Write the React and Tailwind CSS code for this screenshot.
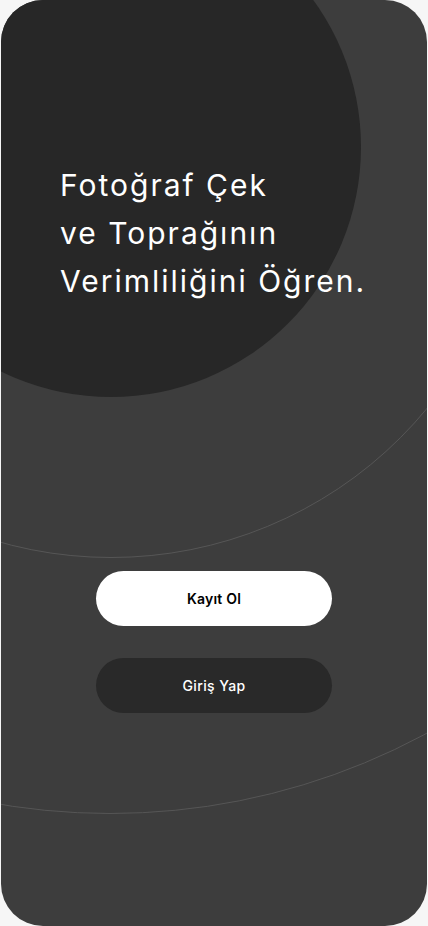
export default function App() {
  return (
    <div className="w-full h-[926px] bg-[#f6f6f6] px-px" style={{ fontFamily: "Inter, 'Noto Sans', sans-serif" }}>
      <div className="relative h-full w-full overflow-hidden rounded-[42px] bg-[#3d3d3d]">
        <div className="absolute left-[-557px] top-[-518px] h-[1332px] w-[1332px] rounded-full border border-[#565656]" />
        <div className="absolute left-[-300px] top-[-262px] h-[820px] w-[820px] rounded-full border border-[#565656]" />
        <div className="absolute left-[-140px] top-[-103px] h-[500px] w-[500px] rounded-full bg-[#272727]" />
        <div className="relative flex flex-col">
          <h1 className="pl-[59px] pt-[161px] text-[30px] leading-[48px] font-normal text-white tracking-[2px]">
            Fotoğraf Çek
            <br />
            ve Toprağının
            <br />
            Verimliliğini Öğren.
          </h1>
          <div className="mt-[266px] flex flex-col items-center gap-8">
            <button className="h-[55px] w-[236px] rounded-full bg-white text-[14px] font-semibold text-black tracking-[0.2px]">
              Kayıt Ol
            </button>
            <button className="h-[55px] w-[236px] rounded-full bg-[#292929] text-[14px] font-medium text-white tracking-[0.4px]">
              Giriş Yap
            </button>
          </div>
        </div>
      </div>
    </div>
  );
}
